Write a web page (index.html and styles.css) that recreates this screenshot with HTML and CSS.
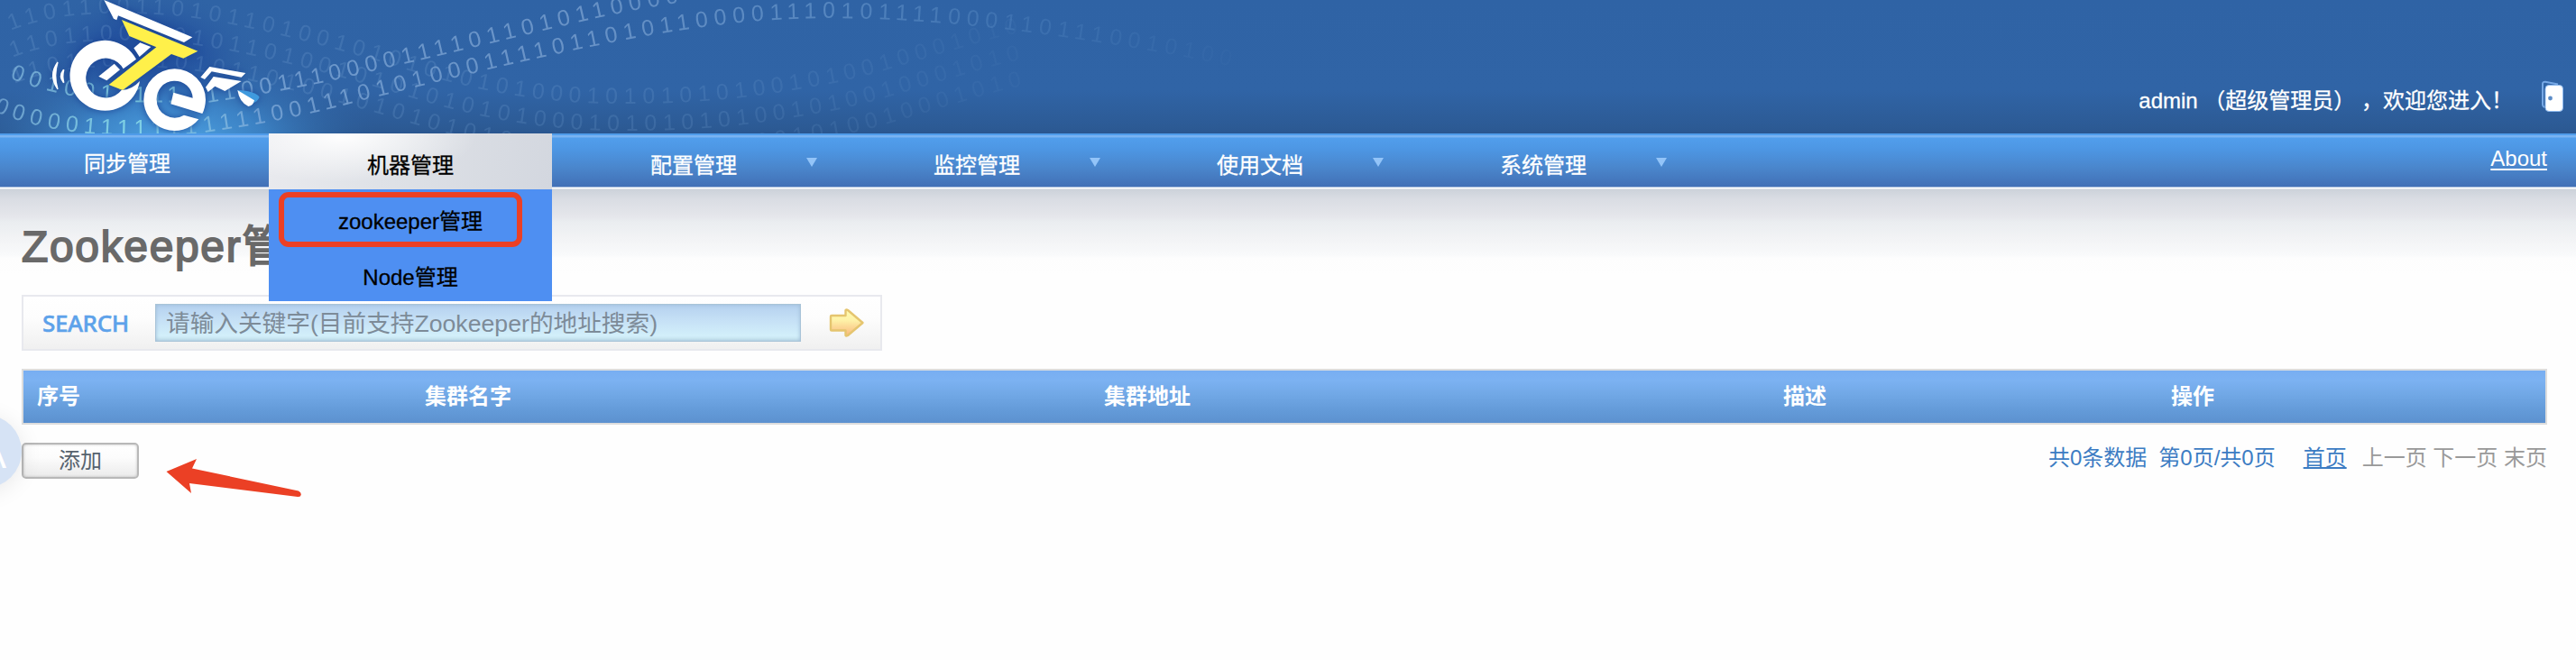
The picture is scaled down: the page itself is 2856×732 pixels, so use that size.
FILE: index.html
```html
<!DOCTYPE html>
<html lang="zh-CN">
<head>
<meta charset="utf-8">
<title>Zookeeper管理</title>
<link rel="stylesheet" href="styles.css">
</head>
<body>
<header class="banner">
  <svg class="banner-art" width="1500" height="148" viewBox="0 0 1500 148" aria-hidden="true">
    <defs>
      <radialGradient id="glow" gradientUnits="userSpaceOnUse" cx="0" cy="0" r="1" gradientTransform="translate(190 158) scale(230 98)">
        <stop offset="0" stop-color="#51a8e8"/>
        <stop offset=".45" stop-color="#418fd4" stop-opacity=".75"/>
        <stop offset="1" stop-color="#2f63a5" stop-opacity="0"/>
      </radialGradient>
      <radialGradient id="shade" gradientUnits="userSpaceOnUse" cx="0" cy="0" r="1" gradientTransform="translate(160 66) scale(130 80)">
        <stop offset="0" stop-color="#1d479a"/>
        <stop offset=".5" stop-color="#1f4b9c" stop-opacity=".6"/>
        <stop offset="1" stop-color="#2f63a5" stop-opacity="0"/>
      </radialGradient>
      <linearGradient id="bright" gradientUnits="userSpaceOnUse" x1="0" y1="0" x2="1420" y2="0">
        <stop offset="0" stop-color="#8fc0e6" stop-opacity=".6"/>
        <stop offset=".1" stop-color="#8fe4ea" stop-opacity=".8"/>
        <stop offset=".2" stop-color="#8db4e0" stop-opacity=".65"/>
        <stop offset=".45" stop-color="#84a9d6" stop-opacity=".68"/>
        <stop offset=".65" stop-color="#74a2d4" stop-opacity=".55"/>
        <stop offset=".8" stop-color="#5f92ca" stop-opacity=".28"/>
        <stop offset="1" stop-color="#5f92ca" stop-opacity="0"/>
      </linearGradient>
      <linearGradient id="faint" gradientUnits="userSpaceOnUse" x1="0" y1="0" x2="1300" y2="0">
        <stop offset="0" stop-color="#7aa6d6" stop-opacity=".24"/>
        <stop offset=".6" stop-color="#7aa6d6" stop-opacity=".2"/>
        <stop offset=".9" stop-color="#7aa6d6" stop-opacity=".04"/>
        <stop offset="1" stop-color="#7aa6d6" stop-opacity="0"/>
      </linearGradient>
      <path id="wave-a0" d="M11 87 C60 106 120 118 220 112"/>
      <path id="wave-a" d="M230 114 C270 108 340 97 408 80 C480 64 560 44 640 25 C700 11 760 0 830 -8"/>
      <path id="wave-b0" d="M-7 123 C40 145 120 156 222 148"/>
      <path id="wave-b" d="M226 147 C290 138 350 126 399 112 C480 92 560 72 640 55 C720 38 800 24 880 21 C960 18 1040 24 1120 33 C1220 46 1320 62 1420 86"/>
      <path id="wave-c" d="M12 34 C60 14 120 12 190 17 C260 24 350 47 440 74 C540 105 610 115 690 115 C790 115 850 106 930 91 C1010 73 1080 44 1160 30 C1220 20 1280 15 1320 14"/>
    </defs>
    <rect width="520" height="148" fill="url(#shade)"/>
    <rect width="520" height="148" fill="url(#glow)"/>
    <g class="digits" fill="url(#faint)">
      <text><textPath href="#wave-c">11011001101011010010101010101000101010101001010010001010</textPath></text>
      <text transform="translate(2 30)"><textPath href="#wave-c">11011001101011010010101010101000101010101001010010001010</textPath></text>
      <text transform="translate(4 59)"><textPath href="#wave-c">11011001101011010010101010101000101010101001010010001010</textPath></text>
    </g>
    <g class="digits" fill="url(#bright)">
      <text><textPath href="#wave-a0">0010011111</textPath></text>
      <text><textPath href="#wave-a">110011100001111011010110000</textPath></text>
      <text><textPath href="#wave-b0">000001111111</textPath></text>
      <text><textPath href="#wave-b">1111001110101000111101101011000011101011110001101110010100</textPath></text>
    </g>
    <g class="logo" transform="scale(.33333)" fill="#fff">
      <path d="M453 197 A117 117 0 1 0 465 270 Q440 298 404 300 A66 66 0 1 1 410 229 Z"/>
      <path d="M328 254 L380 212 L399 232 L355 268 Z"/>
      <path d="M445 160 L466 142 L502 156 L464 189 Z"/>
      <path d="M346 0 L640 124 L612 141 L393 52 L388 67 L378 62 Z"/>
      <path d="M405 66 L658 170 L610 194 L570 180 L408 300 L362 282 L520 157 L430 120 Z" fill="#fff04a"/>
      <path d="M673 378 L568 346 L577 308 L641 326 A60 60 0 0 0 521 332 A60 60 0 0 0 612 383 L661 397 A103 103 0 0 1 478 332 A103 103 0 0 1 684 332 Q683 358 673 378 Z"/>
      <path d="M667 257 L697 222 L817 243 L803 257 L704 238 L681 264 Z"/>
      <path d="M684 290 L710 255 L803 270 L748 303 L715 287 L692 306 Z"/>
      <path d="M790 300 Q850 303 863 323 Q856 340 840 342 Z" fill="#3f9ade"/>
      <path d="M790 300 Q796 340 826 354 Q842 352 846 334 Z"/>
      <path d="M192 207 Q160 250 192 297 Q178 250 192 207 Z" stroke="#fff" stroke-width="4"/>
      <path d="M212 232 Q194 254 212 275 Q206 254 212 232 Z" stroke="#fff" stroke-width="5"/>
    </g>
  </svg>
  <div class="user">
    <span>admin （超级管理员） ，欢迎您进入！</span>
    <svg class="door" width="26" height="38" viewBox="0 0 26 38" role="img" aria-label="退出">
      <path d="M4 31 Q2 30 2 28 V5 Q2 2.5 5 2.7 L19 5.5" fill="none" stroke="#77a9e6" stroke-width="2"/>
      <rect x="5" y="6.500" width="19.500" height="29" rx="4" fill="#fff" stroke="#8db9ee"/>
      <circle cx="10.500" cy="21" r="2.400" fill="#5b8cc8"/>
    </svg>
  </div>
</header>

<nav class="nav">
  <ul class="menu">
    <li class="item first"><span>同步管理</span></li>
    <li class="item active"><span>机器管理</span>
      <ul class="submenu">
        <li class="marked">zookeeper管理</li>
        <li>Node管理</li>
      </ul>
    </li>
    <li class="item drop"><span>配置管理</span></li>
    <li class="item drop"><span>监控管理</span></li>
    <li class="item drop"><span>使用文档</span></li>
    <li class="item drop"><span>系统管理</span></li>
  </ul>
  <a class="about" href="#">About</a>
</nav>

<main class="page">
  <h1 class="title">Zookeeper管理</h1>
  <form class="search">
    <label class="search-label" for="kw">SEARCH</label>
    <input class="search-input" id="kw" type="text" placeholder="请输入关键字(目前支持Zookeeper的地址搜索)">
    <svg class="go" width="40" height="34" viewBox="0 0 40 34" aria-hidden="true">
      <defs>
        <linearGradient id="gold" x1="0" y1="0" x2="0" y2="1">
          <stop offset="0" stop-color="#fffcb0"/>
          <stop offset=".4" stop-color="#fef2a8"/>
          <stop offset="1" stop-color="#f9b77c"/>
        </linearGradient>
      </defs>
      <path d="M3 9 H18.500 V3 Q19.500 2 21 3 L37.500 17 L21 31 Q19 32 18.500 31 V25.500 H3 Q2 25.500 2 24.500 V10 Q2 9 3 9 Z" fill="url(#gold)" stroke="#e5c56f" stroke-width="2.400" stroke-linejoin="round"/>
    </svg>
  </form>

  <div class="grid-head">
    <span>序号</span><span>集群名字</span><span>集群地址</span><span>描述</span><span>操作</span>
  </div>

  <div class="footer">
    <button class="add" type="button">添加</button>
    <div class="pager">
      <span>共0条数据</span><span class="pages">第0页/共0页</span><a href="#">首页</a><span class="off">上一页 下一页 末页</span>
    </div>
  </div>
</main>

<div class="bubble"><span>A</span></div>
<svg class="pointer" width="156" height="48" viewBox="0 0 156 48" aria-hidden="true">
  <path d="M.5 17 L34 3 L29 13.500 L147 38.500 Q150 40 149.800 42.500 Q149.500 45.500 146 45 L26 30 L28 41 Z" fill="#eb4025"/>
</svg>
</body>
</html>
```

FILE: styles.css
```css
*, *::before, *::after { box-sizing: border-box; }

body {
  margin: 0;
  height: 732px;
  position: relative;
  overflow: hidden;
  background: #fefefe;
  font: 24px/32px "Liberation Sans", "Noto Sans CJK SC", sans-serif;
}

ul { list-style: none; margin: 0; padding: 0; }

/* Banner */
.banner {
  height: 148px;
  position: relative;
  display: flex;
  justify-content: flex-end;
  background: linear-gradient(#2f63a5 0, #3064a6 100px, #2c5a94 142px, #2a568f 148px);
}
.banner-art { position: absolute; left: 0; top: 0; }
.digits { font-family: "Liberation Sans", sans-serif; font-size: 25px; letter-spacing: 6.7px; stroke: none; filter: blur(.7px); }
.logo { filter: drop-shadow(0 0 12px #1d4796); }
.user {
  position: relative;
  display: flex;
  align-items: flex-start;
  padding: 88px 13px 0 0;
  color: #fff;
}
.user span { padding-top: 8px; -webkit-text-stroke: .3px #fff; }
.door { margin-left: 31px; }

/* Navigation */
.nav {
  height: 62px;
  display: flex;
  justify-content: space-between;
  background: linear-gradient(#4f9cea 0, #4f9cea 2px, #7ab3f1 2px, #7ab3f1 4px, #519eec 5px, #4d96e3 18px, #4a86cc 38px, #4271b7 58px, #4271b7 59px, #a9bedd 59px, #a9bedd 60px, #fff 60px, #fff 61px, #c9d0d9 62px);
}
.menu { display: flex; }
.item {
  width: 314px;
  height: 62px;
  position: relative;
  text-align: center;
  color: #fff;
  padding-top: 20px;
  -webkit-text-stroke: .3px currentColor;
}
.item.first { width: 298px; padding: 18px 16px 0 0; }
.item.active {
  color: #000;
  background: radial-gradient(ellipse 150px 50px at 80px 4px, rgba(255,255,255,.95), rgba(255,255,255,0)), linear-gradient(100deg, #e9eaee 0, #dfe2e7 40%, #d3d7df 100%);
}
.item.drop::after {
  content: "";
  position: absolute;
  right: 20px;
  top: 27px;
  border: 6px solid transparent;
  border-top: 10px solid #93c4f8;
  border-bottom: 0;
}
.submenu {
  position: absolute;
  z-index: 2;
  left: 0;
  top: 62px;
  width: 314px;
  background: #4e8ff2;
}
.submenu li { height: 62px; padding-top: 20px; position: relative; }
.marked::after {
  content: "";
  position: absolute;
  left: 11px;
  top: 3px;
  width: 270px;
  height: 61px;
  border: 6px solid #eb4025;
  border-radius: 11px;
}
.about {
  margin: 12px 32px 0 0;
  height: 32px;
  color: #fff;
  text-underline-offset: 3px;
  text-decoration-thickness: 2px;
}

/* Page */
.page {
  padding: 0 32px 0 24px;
  background: linear-gradient(#ccd2da 0, #d9dce3 10px, #e5e6eb 30px, #eaedf0 36px, #f2f3f5 54px, #f9fafb 73px, #fdfdfd 76px, #fefefe 95px);
}
.title {
  margin: 0;
  padding-top: 34px;
  height: 117px;
  font-size: 48px;
  font-weight: 400;
  line-height: 60px;
  letter-spacing: 1.65px;
  white-space: nowrap;
  color: #696969;
  -webkit-text-stroke: 1.8px #696969;
}
.search {
  width: 954px;
  height: 62px;
  display: flex;
  align-items: center;
  border: 2px solid #e8e9ee;
  background: linear-gradient(#fff, #fdfdfd 40%, #f0f0f0);
}
.search-label {
  width: 146px;
  padding-left: 21px;
  font: 500 26px/32px "Noto Sans", "Open Sans", sans-serif;
  letter-spacing: -.4px;
  color: #5da2ea;
  -webkit-text-stroke: .5px #5da2ea;
}
.search-input {
  width: 716px;
  height: 42px;
  margin: 0 31px 0 0;
  padding: 2px 11px 0;
  border: 1px solid #a9c4d8;
  background: linear-gradient(#b5d1ef, #c6e1f6 45%, #d2effa 85%, #c8e4ee);
  box-shadow: inset 0 0 4px #9dbcd6;
  font: 26.67px/36px "Liberation Sans", "Noto Sans CJK SC", sans-serif;
}
.search-input::placeholder { color: #7d8b98; opacity: 1; }
.grid-head {
  margin-top: 20px;
  height: 62px;
  display: grid;
  grid-template-columns: 430px 753px 753px 430px 430px;
  align-items: center;
  border: 2px solid #ddd;
  background: linear-gradient(#78aef2, #7cb2f2 18%, #71a8e6 45%, #6299d7 80%, #5c91cf);
  color: #fff;
  font-weight: 700;
}
.grid-head span { padding-left: 15px; }
.footer {
  margin-top: 20px;
  display: flex;
  justify-content: space-between;
  align-items: flex-start;
}
.add {
  width: 130px;
  height: 40px;
  padding: 0;
  border: 2px solid #b8b8b8;
  border-radius: 5px;
  background: linear-gradient(#fff, #fcfcfc 40%, #ebebeb);
  box-shadow: inset 0 0 3px #bbb;
  font: 24px/34px "Liberation Sans", "Noto Sans CJK SC", sans-serif;
  color: #56626e;
}
.pager { display: flex; padding-top: 1px; color: #3c7cc3; }
.pages { margin-left: 13px; }
.pager a { margin-left: 31px; color: inherit; text-underline-offset: 2px; text-decoration-thickness: 2px; }
.off { margin-left: 17px; color: #999; }

/* Floating assistant bubble and callout arrow */
.bubble {
  position: absolute;
  left: -57px;
  top: 460px;
  width: 81px;
  height: 81px;
  border-radius: 50%;
  background: #d6e3f5;
  box-shadow: 0 4px 26px rgba(0,0,0,.09);
  color: #fff;
  font-size: 42px;
  line-height: 90px;
  text-align: right;
  padding-right: 17px;
}
.pointer { position: absolute; left: 184px; top: 506px; }
```
